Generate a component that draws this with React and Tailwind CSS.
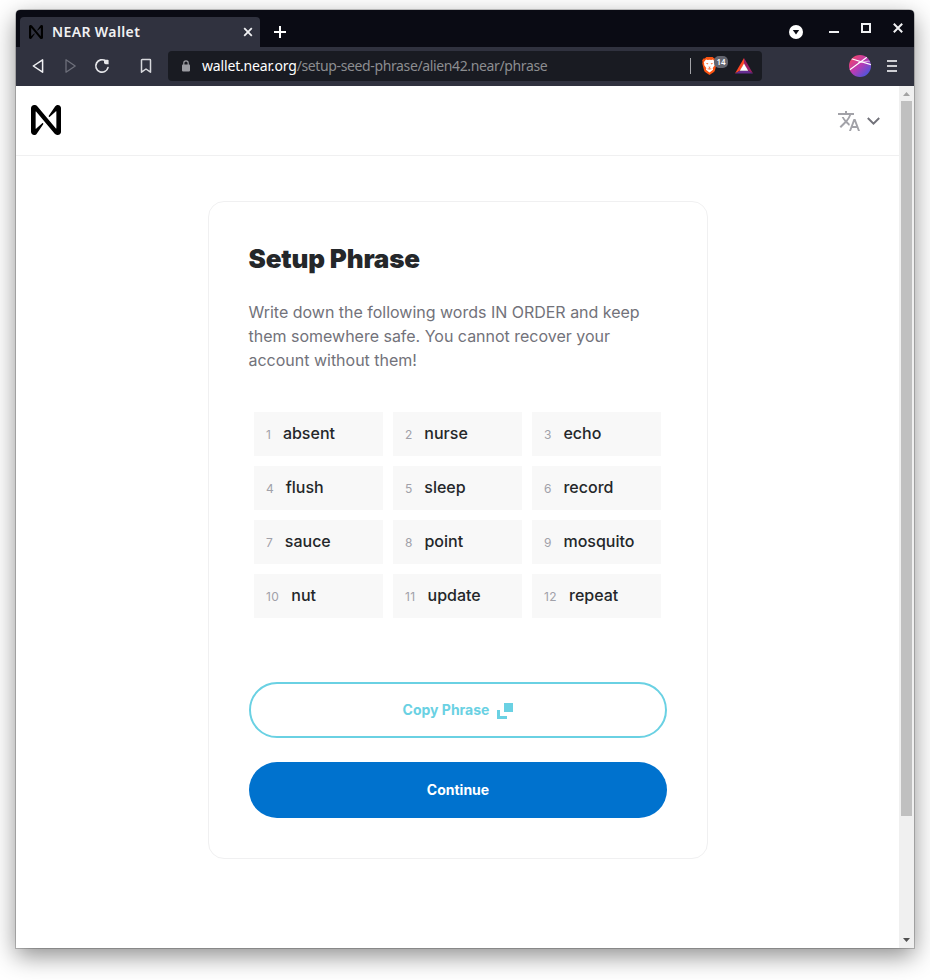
import React from "react";
import { MdTranslate } from "react-icons/md";

const words = [
  "absent", "nurse", "echo",
  "flush", "sleep", "record",
  "sauce", "point", "mosquito",
  "nut", "update", "repeat",
];

function NearMark({ className }) {
  return (
    <svg viewBox="0 0 90 90" className={className} fill="currentColor">
      <path d="M72.2,4.6L53.4,32.5c-1.3,1.9,1.2,4.2,3,2.6L74.9,19c0.5-0.4,1.2-0.1,1.2,0.6v50.3c0,0.7-0.9,1-1.3,0.5l-56-67C17,1.2,14.4,0,11.5,0h-2C4.3,0,0,4.3,0,9.6v70.8C0,85.7,4.3,90,9.6,90c3.3,0,6.4-1.7,8.2-4.6l18.8-27.9c1.3-1.9-1.2-4.2-3-2.6l-18.5,16c-0.5,0.4-1.2,0.1-1.2-0.6V20.1c0-0.7,0.9-1,1.3-0.5l56,67c1.8,2.2,4.5,3.4,7.3,3.4h2c5.3,0,9.6-4.3,9.6-9.6V9.6c0-5.3-4.3-9.6-9.6-9.6C77.1,0,74,1.7,72.2,4.6z" />
    </svg>
  );
}

function TabStrip() {
  return (
    <div className="flex h-[37px] items-end bg-[#0a0b14] pl-1">
      <div className="flex h-[30px] w-[240px] items-center rounded-t-[4px] bg-[#30323f] pl-[9px] pr-[7px]">
        <NearMark className="h-[14px] w-[14px] text-black" />
        <span className="ml-[9px] whitespace-nowrap font-['Noto_Sans',sans-serif] text-[14px] font-semibold leading-[20px] tracking-[0.38px] text-[#f0f1f3]">
          NEAR Wallet
        </span>
        <svg viewBox="0 0 10 10" className="ml-auto h-[10px] w-[10px]" stroke="#f0f1f3" strokeWidth="1.8">
          <path d="M1.2 1.2l7.6 7.6M8.8 1.2L1.2 8.8" />
        </svg>
      </div>
      <svg viewBox="0 0 12 12" className="mb-[9px] ml-[14px] h-3 w-3" stroke="#fff" strokeWidth="2">
        <path d="M6 0v12M0 6h12" />
      </svg>
      <div className="ml-auto flex h-[37px] items-start pr-[11px]">
        <svg viewBox="0 0 14 14" className="mt-[15px] h-[14px] w-[14px]">
          <circle cx="7" cy="7" r="7" fill="#fff" />
          <path d="M3.8 5h6.4L7 9.6z" fill="#0a0b14" />
        </svg>
        <div className="ml-[26px] mt-[21px] h-[2px] w-[10px] bg-[#f0f1f3]" />
        <div className="ml-[22px] mt-[13px] h-[10px] w-[10px] border-2 border-[#f0f1f3]" />
        <svg viewBox="0 0 10 10" className="ml-[22px] mt-[13px] h-[10px] w-[10px]" stroke="#f0f1f3" strokeWidth="2">
          <path d="M.8.8l8.4 8.4M9.2.8L.8 9.2" />
        </svg>
      </div>
    </div>
  );
}

function Toolbar() {
  return (
    <div className="flex h-[39px] items-center bg-[#30323f] pb-px pl-[15px] pr-[17px]">
      <svg viewBox="0 0 14 16" className="h-4 w-[14px]" fill="none" stroke="#f0f1f3" strokeWidth="1.5" strokeLinejoin="round">
        <path d="M11.6 1.8v12.4L2.3 8z" />
      </svg>
      <svg viewBox="0 0 14 16" className="ml-[19px] h-4 w-[14px]" fill="none" stroke="#6d6f7a" strokeWidth="1.3" strokeLinejoin="round">
        <path d="M2 1.8v12.4L11.2 8z" />
      </svg>
      <svg viewBox="0 0 16 16" className="ml-[16px] h-4 w-4" fill="none" stroke="#e6e7ea" strokeWidth="1.7" strokeLinecap="round">
        <path d="M14 9.6A6.2 6.2 0 1 1 11.6 2.9" />
        <path d="M10 1.8h3.6a1 1 0 0 1 1 1v3.4h-2.8a1.8 1.8 0 0 1-1.8-1.8z" fill="#e6e7ea" stroke="none" />
      </svg>
      <svg viewBox="0 0 12 16" className="ml-[30px] h-4 w-3" fill="none" stroke="#d7d8dc" strokeWidth="1.5" strokeLinejoin="round">
        <path d="M1.5 2.2q0-.7.7-.7h7.6q.7 0 .7.7v12l-4.5-3.2-4.5 3.2z" />
      </svg>
      <div className="ml-4 flex h-[30px] w-[594px] items-center rounded-[4px] bg-[#191b22] pl-[14px] pr-[9px]">
        <svg viewBox="0 0 8 12" className="mb-px h-3 w-2">
          <path d="M1.8 5V3a2.2 2.2 0 0 1 4.4 0v2" fill="none" stroke="#9b9ca2" strokeWidth="1.2" />
          <rect y="4.4" width="8" height="7" rx=".8" fill="#9b9ca2" />
        </svg>
        <div className="ml-3 flex whitespace-nowrap font-['Noto_Sans',sans-serif] text-[14px] leading-5">
          <span className="tracking-[-0.17px] text-white">wallet.near.org</span>
          <span className="tracking-[-0.37px] text-[#8c8d90]">/setup-seed-phrase/alien42.near/phrase</span>
        </div>
        <div className="ml-auto h-4 w-px bg-[#a3a4a8]" />
        <div className="relative ml-[11px] h-[18px] w-[26px]">
          <svg viewBox="0 0 15 18" className="h-[18px] w-[15px]">
            <path d="M4.4 0h6.2l1.6 1.6 1.4-.1 1.3 2-.5 1.4.4 1.3-1.9 7.3q-.3 1.1-1.3 1.8L7.5 18l-4.1-2.7q-1-.7-1.3-1.8L.2 6.2l.4-1.3L.1 3.5l1.3-2 1.4.1z" fill="#fb5412" />
            <path d="M4 2.6l1.8.4 1.7-.3 1.7.3 1.8-.4 2.2 2.7-.5 1.6.2 1.2-2.2 3 .4 1.6-3.6 2.7-3.6-2.7.4-1.6-2.2-3 .2-1.2-.5-1.6z" fill="#fff" />
            <path d="M3.4 5.7l2.9.8-.4 1.1zM11.6 5.7l-2.9.8.4 1.1zM6.2 9.7h2.6L7.5 10.9zM4.9 12l2.6-.8 2.6.8-2.6.5z" fill="#fb5412" />
          </svg>
          <span className="absolute left-[12px] top-[-1px] h-3 w-[14px] rounded-[5px] bg-[#63656f] text-center font-['Noto_Sans',sans-serif] text-[8px] font-semibold leading-3 text-white">
            14
          </span>
        </div>
        <svg viewBox="0 0 18 16" className="ml-[7px] h-4 w-[18px]">
          <path d="M9 0L0 15.5l5.2-3L9 6z" fill="#ff4724" />
          <path d="M9 0l9 15.5-5.2-3L9 6z" fill="#9e1f63" />
          <path d="M0 15.5h18l-5.2-3H5.2z" fill="#662d91" />
          <path d="M9 5.4l4.2 7.3H4.8z" fill="#fff" />
        </svg>
      </div>
      <svg viewBox="0 0 22 22" className="ml-auto h-[22px] w-[22px]">
        <defs>
          <linearGradient id="avatar" x1="0.1" y1="0.1" x2="0.85" y2="0.9">
            <stop offset="0" stopColor="#f0456a" />
            <stop offset=".5" stopColor="#b93bb4" />
            <stop offset="1" stopColor="#4a55dc" />
          </linearGradient>
          <clipPath id="avatar-clip"><circle cx="11" cy="11" r="11" /></clipPath>
        </defs>
        <circle cx="11" cy="11" r="11" fill="url(#avatar)" />
        <g clipPath="url(#avatar-clip)" stroke="#fff" strokeWidth="1.1" fill="none">
          <path d="M.8 14.8L18.6 1.8M2.4 3.8L22 9.6" />
          <path d="M9 7.6l12-1.6" strokeOpacity=".55" />
        </g>
      </svg>
      <div className="ml-4 flex w-[10px] flex-col gap-[3px]">
        <div className="h-[2px] bg-[#cfd0d4]" />
        <div className="h-[2px] bg-[#cfd0d4]" />
        <div className="h-[2px] bg-[#cfd0d4]" />
      </div>
    </div>
  );
}

function ScrollBar() {
  return (
    <div className="flex w-[15px] flex-col items-center bg-[#f0f0f0]">
      <svg viewBox="0 0 15 15" className="h-[15px] w-[15px]">
        <path d="M4 10l3.5-4L11 10z" fill="#a3a3a3" />
      </svg>
      <div className="h-[715px] w-[11px] bg-[#c0c0c0]" />
      <svg viewBox="0 0 15 15" className="mt-auto h-[15px] w-[15px]">
        <path d="M4 5h7L7.5 9z" fill="#505050" />
      </svg>
    </div>
  );
}

function SetupCard() {
  return (
    <main className="ml-[192px] mt-[45px] h-[658px] w-[500px] rounded-2xl border border-[#f0f0f1] px-10 pt-10">
      <h1 className="-ml-[0.5px] text-[26px] font-black leading-[34px] tracking-[-0.17px] text-[#24272a]">Setup Phrase</h1>
      <p className="-ml-[0.5px] mt-[24px] text-[16px] leading-6 tracking-[-0.01px] text-[#72727a]">
        Write down the following words IN ORDER and keep
        <br />
        them somewhere safe. You cannot recover your
        <br />
        account without them!
      </p>
      <ol className="mt-10 grid grid-cols-[129px_129px_129px] gap-[10px] pl-[5px]">
        {words.map((word, i) => (
          <li key={word} className="flex h-11 items-baseline bg-[#f8f8f8] pl-3 pt-[9px]">
            <span className={i > 8 ? "text-[12px] leading-6 tracking-[0.4px] text-[#a1a1a9]" : "text-[12px] leading-6 text-[#a1a1a9]"}>
              {i + 1}
            </span>
            <span className="ml-3 text-[16px] font-medium leading-6 text-[#24272a]">{word}</span>
          </li>
        ))}
      </ol>
      <button className="mt-16 flex h-14 w-full items-center justify-center gap-2 rounded-full border-2 border-[#6ad1e3] pb-[2px] text-[14px] font-bold text-[#6ad1e3]">
        Copy Phrase
        <svg viewBox="0 0 16 16" className="mt-1 h-4 w-4" fill="currentColor">
          <path d="M7 0h9v9H7z" />
          <path d="M0 7h3v6h7v3H0z" />
        </svg>
      </button>
      <button className="mt-6 flex h-14 w-full items-center justify-center rounded-full bg-[#0072ce] pb-[2px] text-[14px] font-bold text-white">
        Continue
      </button>
    </main>
  );
}

export default function App() {
  return (
    <div className="h-[980px] w-[930px] overflow-hidden bg-white pl-4 pt-[10px] font-['Inter',sans-serif]">
      <div className="h-[938px] w-[898px] rounded-t-[5px] shadow-[0_0_0_1px_rgba(0,0,0,0.2),0_8px_24px_rgba(0,0,0,0.45)]">
        <div className="flex h-full flex-col overflow-hidden rounded-t-[4px] bg-white">
          <TabStrip />
          <Toolbar />
          <div className="flex flex-1">
            <div className="flex-1">
              <header className="flex h-[70px] items-center border-b border-[#f0f0f1] pl-[15px] pr-[19px]">
                <NearMark className="mb-[2px] h-[30px] w-[30px] text-black" />
                <MdTranslate className="ml-auto h-6 w-6 text-[#a2a2a8]" />
                <svg viewBox="0 0 13 8" className="ml-[6px] mt-px h-2 w-[13px]" fill="none" stroke="#72727a" strokeWidth="2">
                  <path d="M.8 1l5.7 5.6L12.2 1" />
                </svg>
              </header>
              <SetupCard />
            </div>
            <ScrollBar />
          </div>
        </div>
      </div>
    </div>
  );
}
